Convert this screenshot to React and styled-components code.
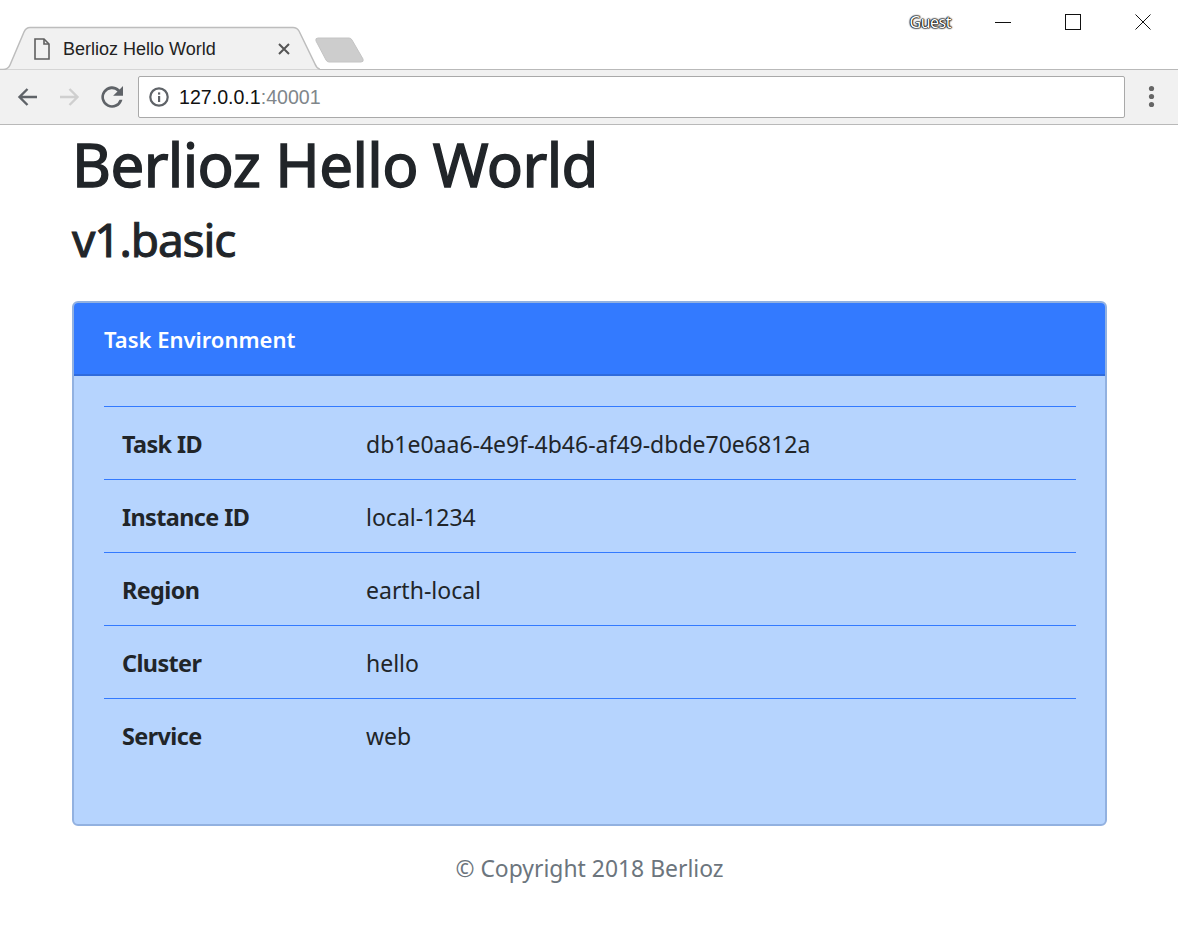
import React from "react";
import styled, { createGlobalStyle } from "styled-components";

const GlobalStyle = createGlobalStyle`
  html, body {
    margin: 0;
    padding: 0;
    background: #fff;
  }
  body {
    font-family: "Noto Sans", "Open Sans", sans-serif;
    color: #212529;
  }
`;

const TitleBar = styled.div`
  height: 70px;
  box-sizing: border-box;
  display: flex;
  background: #fff;
  border-bottom: 1px solid #b9b9b9;
`;

const TabStrip = styled.div`
  flex: 1;
  display: flex;
  align-items: flex-end;
`;

const Tab = styled.div`
  position: relative;
  width: 320px;
  height: 44px;
  margin-bottom: -1px;
  box-sizing: border-box;
  padding: 0 30px 0 34px;
  display: flex;
  align-items: center;
  gap: 13px;
  font-family: "Liberation Sans", sans-serif;
  font-size: 18px;
  color: #222;

  & > svg.shape {
    position: absolute;
    left: 0;
    top: 0;
  }
  & > span, & > svg.icon {
    position: relative;
  }
  & > svg.icon {
    margin-top: 2px;
    flex: none;
  }
`;

const TabTitle = styled.span`
  flex: 1;
  margin-top: 2px;
`;

const NewTab = styled.svg`
  margin: 0 0 6px -6px;
`;

const GuestLabel = styled.div`
  padding: 11px 17px 0 0;
  font-family: "Noto Sans", sans-serif;
  font-size: 16px;
  letter-spacing: -0.5px;
  color: #fff;
  text-shadow: 0 0 2px #000, 0 0 2px #000, 0 0 1px #000, 0 0 1px #000, 0 0 1px #000;
`;

const WindowButtons = styled.div`
  display: flex;
`;

const WindowButton = styled.div`
  width: 70px;
  height: 43px;
  display: flex;
  align-items: center;
  justify-content: center;
`;

const Toolbar = styled.div`
  height: 55px;
  box-sizing: border-box;
  display: flex;
  align-items: center;
  background: #f1f1f1;
  border-bottom: 1px solid #b9b9b9;
  padding: 0 0 1px 17px;
`;

const NavIcon = styled.svg`
  display: block;
  margin-right: 21px;
  flex: none;
`;

const AddressBar = styled.div`
  width: 987px;
  height: 42px;
  box-sizing: border-box;
  margin-left: -6px;
  display: flex;
  align-items: center;
  gap: 10px;
  padding-left: 10px;
  background: #fff;
  border: 1px solid #a9a9a9;
  border-radius: 2px;
  font-family: "Liberation Sans", sans-serif;
  font-size: 19.6px;
  color: #111;

  & > span {
    margin-top: 1px;
  }
`;

const Port = styled.span`
  color: #80868b;
`;

const MenuDots = styled.svg`
  margin-left: 23px;
`;

const Page = styled.main`
  padding: 0 71px 0 72px;
`;

const Title = styled.h1`
  margin: 0;
  padding-top: 3px;
  font-size: 60px;
  font-weight: 400;
  line-height: 72px;
  letter-spacing: -0.6px;
  -webkit-text-stroke: 1.4px #212529;
  color: #212529;
`;

const Subtitle = styled.h2`
  margin: 0 0 26px;
  padding-top: 3px;
  font-size: 46px;
  font-weight: 400;
  line-height: 72px;
  letter-spacing: -1.1px;
  -webkit-text-stroke: 1px #212529;
`;

const Card = styled.section`
  border: 2px solid #92b1e0;
  border-radius: 6px;
  background: #b6d4fe;
  overflow: hidden;
`;

const CardHeader = styled.header`
  height: 73px;
  box-sizing: border-box;
  padding: 0 30px;
  display: flex;
  align-items: center;
  background: #337aff;
  border-bottom: 2px solid #2f6bdc;
  color: #fff;
  font-size: 22px;
  font-weight: 600;
`;

const CardBody = styled.div`
  padding: 30px 29px 52px 30px;
`;

const Table = styled.table`
  width: 100%;
  border-collapse: collapse;
  font-size: 23px;
  line-height: 36px;
`;

const Row = styled.tr`
  height: 73px;
  border-top: 1px solid #337aff;
`;

const Th = styled.th`
  width: 244px;
  padding: 2px 0 0 18px;
  text-align: left;
  font-size: 23.4px;
  font-weight: 700;
  letter-spacing: -0.6px;
`;

const Td = styled.td`
  padding: 2px 0 0;
`;

const Footer = styled.footer`
  padding-top: 25px;
  text-align: center;
  font-size: 22.9px;
  line-height: 36px;
  color: #6c757d;
`;

const rows = [
  ["Task ID", "db1e0aa6-4e9f-4b46-af49-dbde70e6812a"],
  ["Instance ID", "local-1234"],
  ["Region", "earth-local"],
  ["Cluster", "hello"],
  ["Service", "web"],
];

export default function App() {
  return (
    <>
      <GlobalStyle />
      <TitleBar>
        <TabStrip>
          <Tab>
            <svg className="shape" width="320" height="44" viewBox="0 0 320 44">
              <path d="M0 43.5 H3 Q8 43.5 10 39 L24 6 Q26 1.5 30 1.5 H293 Q297 1.5 299 5 L315 38 Q317 43.5 322 43.5" fill="#f1f1f1" stroke="#bdbdbd" strokeWidth="1.5" />
            </svg>
            <svg className="icon" width="16" height="22" viewBox="0 0 16 22" fill="none" stroke="#5f5f5f" strokeWidth="1.6">
              <path d="M1 1 H10 L15 6 V21 H1 Z" />
              <path d="M10 1 V6 H15" />
            </svg>
            <TabTitle>Berlioz Hello World</TabTitle>
            <svg className="icon" width="12" height="12" viewBox="0 0 12 12" stroke="#555" strokeWidth="2">
              <path d="M1 1 L11 11 M11 1 L1 11" />
            </svg>
          </Tab>
          <NewTab width="52" height="26" viewBox="0 0 52 26">
            <path d="M4 1 H35 Q37 1 38 3 L49 22 Q50 25 47 25 H15 Q13 25 12 23 L2 4 Q1 1 4 1 Z" fill="#cdcdcd" stroke="#c4c4c4" />
          </NewTab>
        </TabStrip>
        <GuestLabel>Guest</GuestLabel>
        <WindowButtons>
          <WindowButton>
            <svg width="16" height="16" viewBox="0 0 16 16" stroke="#111" fill="none"><path d="M0 8.5 H16" /></svg>
          </WindowButton>
          <WindowButton>
            <svg width="16" height="16" viewBox="0 0 16 16" stroke="#111" fill="none"><rect x="0.5" y="0.5" width="15" height="15" /></svg>
          </WindowButton>
          <WindowButton>
            <svg width="16" height="16" viewBox="0 0 16 16" stroke="#111" fill="none"><path d="M0.5 0.5 L15.5 15.5 M15.5 0.5 L0.5 15.5" /></svg>
          </WindowButton>
        </WindowButtons>
      </TitleBar>
      <Toolbar>
        <NavIcon width="21" height="20" viewBox="0 0 21 20" fill="none" stroke="#5f6368" strokeWidth="2.4">
          <path d="M20 10 H3 M10.5 2 L2.5 10 L10.5 18" />
        </NavIcon>
        <NavIcon width="21" height="20" viewBox="0 0 21 20" fill="none" stroke="#cfcfcf" strokeWidth="2.4">
          <path d="M1 10 H18 M10.5 2 L18.5 10 L10.5 18" />
        </NavIcon>
        <NavIcon width="22" height="22" viewBox="0 0 24 24">
          <path d="M20.3 3.7 A11.7 11.7 0 1 0 23.4 15 H20.2 A8.7 8.7 0 1 1 18 6 L13.2 10.6 H24 V0 Z" fill="#5f6368" />
        </NavIcon>
        <AddressBar>
          <svg width="20" height="20" viewBox="0 0 20 20" fill="none">
            <circle cx="10" cy="10" r="8.7" stroke="#5f6368" strokeWidth="2.2" />
            <rect x="9" y="9" width="2.2" height="6" fill="#5f6368" />
            <rect x="9" y="5.4" width="2.2" height="2.2" fill="#5f6368" />
          </svg>
          <span>127.0.0.1<Port>:40001</Port></span>
        </AddressBar>
        <MenuDots width="7" height="23" viewBox="0 0 7 23" fill="#666">
          <circle cx="3.5" cy="3.5" r="2.6" />
          <circle cx="3.5" cy="11.5" r="2.6" />
          <circle cx="3.5" cy="19.5" r="2.6" />
        </MenuDots>
      </Toolbar>
      <Page>
        <Title>Berlioz Hello World</Title>
        <Subtitle>v1.basic</Subtitle>
        <Card>
          <CardHeader>Task Environment</CardHeader>
          <CardBody>
            <Table>
              <tbody>
                {rows.map(([name, value]) => (
                  <Row key={name}>
                    <Th>{name}</Th>
                    <Td>{value}</Td>
                  </Row>
                ))}
              </tbody>
            </Table>
          </CardBody>
        </Card>
        <Footer>© Copyright 2018 Berlioz</Footer>
      </Page>
    </>
  );
}
